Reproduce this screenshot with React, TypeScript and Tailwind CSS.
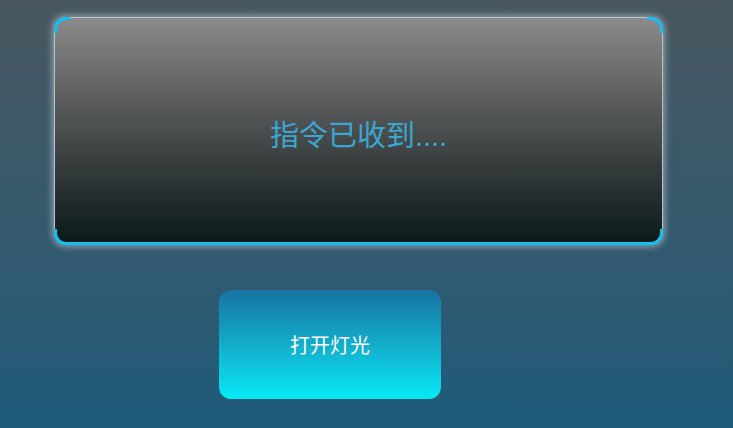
export default function App() {
  return (
    <div
      className="flex h-[428px] w-[733px] flex-col overflow-hidden bg-gradient-to-b from-[#48575f] to-[#1c5b7a]"
      style={{ fontFamily: '"Liberation Sans", "Noto Sans CJK SC", sans-serif' }}
    >
      {/* 状态面板 */}
      <div className="relative ml-[54px] mt-[17px] flex h-[228px] w-[609px] items-center justify-center rounded-[12px] border border-[#b9c3c8] bg-gradient-to-b from-[#8b8b8b] via-[#4a4d4d] to-[#0b1819] shadow-[0_0_6px_2px_rgba(200,215,225,0.55)]">
        <span className="mt-[12px] text-[29px] text-[#3aa7d2]">指令已收到....</span>
        {/* 四角的青色弧线 */}
        <div className="absolute -left-px -top-px h-[16px] w-[16px] rounded-tl-[12px] border-l-[3px] border-t-[3px] border-[#12bff0]" />
        <div className="absolute -right-px -top-px h-[16px] w-[16px] rounded-tr-[12px] border-r-[3px] border-t-[3px] border-[#12bff0]" />
        <div className="absolute -bottom-px -left-px h-[16px] w-[16px] rounded-bl-[12px] border-b-[3px] border-l-[3px] border-[#12bff0]" />
        <div className="absolute -bottom-px -right-px h-[16px] w-[16px] rounded-br-[12px] border-b-[3px] border-r-[3px] border-[#12bff0]" />
        <div className="absolute -bottom-px left-[12px] right-[12px] h-[3px] bg-[#12bff0]" />
      </div>

      {/* 按钮 */}
      <button className="ml-[219px] mt-[45px] flex h-[109px] w-[222px] items-center justify-center rounded-[12px] bg-gradient-to-b from-[#1673a2] to-[#06eaf6] pt-[2px] text-[20px] text-white">
        打开灯光
      </button>
    </div>
  );
}
